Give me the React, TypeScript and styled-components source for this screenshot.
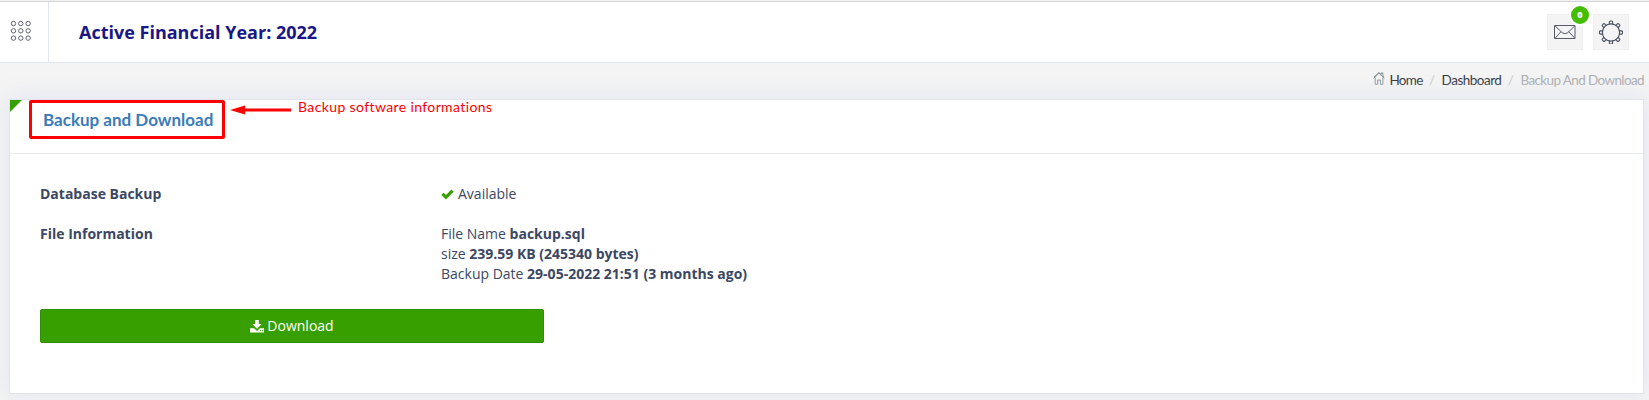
import React from 'react';
import styled, { createGlobalStyle } from 'styled-components';

const Global = createGlobalStyle`
  * { box-sizing: border-box; }
  body {
    margin: 0;
    background: #f4f4f4;
    font: 14px/20px "Open Sans", sans-serif;
    color: #3b4763;
  }
`;

const Page = styled.div`
  height: 400px;
  overflow: hidden;
  border-top: 1px solid #f0f0f0;
  background: #f4f4f4;
`;

const Header = styled.header`
  display: flex;
  height: 62px;
  background: #fff;
  border-top: 1px solid #d3d6d8;
  border-bottom: 1px solid #e1e6ef;
`;

const MenuCell = styled.div`
  width: 49px;
  padding: 18px 0 0 10px;
  border-right: 1px solid #e1e6ef;
`;

const YearTitle = styled.h1`
  flex: 1;
  margin: 0;
  padding: 18px 0 0 30px;
  font-size: 18px;
  line-height: 25px;
  font-weight: 700;
  color: #191785;
`;

const Actions = styled.div`
  display: flex;
  gap: 10px;
  padding: 12px 20px 0 0;
`;

const ActionButton = styled.div`
  position: relative;
  display: flex;
  align-items: center;
  justify-content: center;
  width: 36px;
  height: 36px;
  background: #f4f4f4;
  border: 1px solid #efefef;
`;

const Badge = styled.span`
  position: absolute;
  top: -11px;
  right: -9px;
  width: 22px;
  height: 22px;
  border: 2px solid #fff;
  border-radius: 50%;
  background: #46be00;
  color: #fff;
  font: 800 9px/18px "Open Sans", sans-serif;
  text-align: center;
`;

const Breadcrumb = styled.nav`
  display: flex;
  justify-content: flex-end;
  align-items: center;
  height: 35px;
  padding: 0 5px 2px 0;
  font: 13.5px/20px Lato, sans-serif;
`;

const Crumb = styled.span<{ $muted?: boolean; $spacing: number }>`
  color: ${p => (p.$muted ? '#a9abad' : '#2c2f36')};
  letter-spacing: ${p => p.$spacing}px;
  white-space: nowrap;
`;

const Slash = styled.span`
  width: 19px;
  text-align: center;
  color: #c4c6c8;
`;

const HomeIcon = styled.svg`
  margin: -3px 4px 0 0;
`;

const Card = styled.section`
  position: relative;
  width: 1635px;
  height: 295px;
  margin: 1px 0 0 9px;
  background: #fff;
  border: 1px solid #e1e4ef;
  box-shadow: 0 0 24px 2px #e4e6f1;
`;

const CardHeader = styled.div`
  height: 54px;
  padding: 8px 0 0 33px;
  border-bottom: 1px solid #e9ebed;
`;

const CardTitle = styled.h2`
  margin: 0;
  font: 700 17px/24px Lato, sans-serif;
  color: #3b7bb8;
`;

const Corner = styled.span`
  position: absolute;
  top: 0;
  left: 0;
  border-top: 12px solid #339f00;
  border-right: 12px solid transparent;
`;

const Highlight = styled.div`
  position: absolute;
  top: 0;
  left: 19px;
  width: 196px;
  height: 39px;
  border: 3px solid #f00;
  border-radius: 2px;
`;

const Note = styled.div`
  position: absolute;
  top: -1px;
  left: 220px;
  display: flex;
  gap: 7px;
  font: 14px/15px Lato, sans-serif;
  letter-spacing: 0.38px;
  color: #f00;
`;

const Arrow = styled.svg`
  margin-top: 6px;
`;

const CardBody = styled.div`
  display: flex;
  flex-direction: column;
  gap: 20px;
  padding: 30px;
`;

const Row = styled.div`
  display: grid;
  grid-template-columns: 401px 1fr;
`;

const Label = styled.div`
  font-weight: 700;
`;

const Value = styled.div`
  b { font-weight: 700; }
`;

const CheckIcon = styled.svg`
  margin-right: 4px;
  vertical-align: -1px;
`;

const DownloadButton = styled.button`
  display: flex;
  align-items: center;
  justify-content: center;
  gap: 3px;
  width: 504px;
  height: 34px;
  margin: 5px 0 0;
  padding: 0;
  border: 1px solid #318d04;
  border-radius: 2px;
  background: #37a000;
  color: #fff;
  font: 14px/20px "Open Sans", sans-serif;
`;

const dots = [3, 10.3, 17.6];

export default function App() {
  return (
    <Page>
      <Global />
      <Header>
        <MenuCell>
          <svg width="22" height="22" fill="none" stroke="#62636f" strokeWidth="1">
            {dots.map(y => dots.map(x => <circle key={`${x}-${y}`} cx={x + 0.5} cy={y + 0.5} r="2.2" />))}
          </svg>
        </MenuCell>
        <YearTitle>Active Financial Year: 2022</YearTitle>
        <Actions>
          <ActionButton>
            <svg width="22" height="16" fill="none" stroke="#555b6d" strokeWidth="1">
              <path d="M.5 1.5h20.5v13H.5zM1 1.8l7.2 6.9q2.8 2.2 5.5 0l7.2-6.9M1 14.2l6-6.5M20.8 14.2l-6-6.5" />
            </svg>
            <Badge>0</Badge>
          </ActionButton>
          <ActionButton>
            <svg width="24" height="24" viewBox="-12 -12.5 24 24" fill="none" stroke="#484f62" strokeWidth="1.1">
              <circle r="8.6" />
              {[0, 45, 90, 135, 180, 225, 270, 315].map(a => (
                <path key={a} transform={`rotate(${a})`} d="M-1.6-8.3v-2.2q0-1 1-1h1.2q1 0 1 1v2.2" />
              ))}
            </svg>
          </ActionButton>
        </Actions>
      </Header>
      <Breadcrumb>
        <HomeIcon width="12" height="13" fill="none" stroke="#7c8990" strokeWidth="0.9">
          <path d="M.6 6.4 6 1.2l5.4 5.2M1 4.9 6 .5l2.3 2V.9h1.6v3l1.3 1.2M2.2 5.5v6.8h2.5V8h2.7v4.3h2.5V5.5" />
        </HomeIcon>
        <Crumb $spacing={-0.7}>Home</Crumb>
        <Slash>/</Slash>
        <Crumb $spacing={-0.5}>Dashboard</Crumb>
        <Slash>/</Slash>
        <Crumb $muted $spacing={-0.62}>Backup And Download</Crumb>
      </Breadcrumb>
      <Card>
        <CardHeader>
          <CardTitle>Backup and Download</CardTitle>
        </CardHeader>
        <CardBody>
          <Row>
            <Label>Database Backup</Label>
            <Value>
              <CheckIcon width="13" height="11" viewBox="0 0 13 11">
                <path d="M.3 6 2.5 3.7 5 6.1 10.4.5l2.3 2.2L5 10.5z" fill="#37a000" />
              </CheckIcon>
              Available
            </Value>
          </Row>
          <Row>
            <Label>File Information</Label>
            <Value>
              File Name <b>backup.sql</b><br />
              size <b>239.59 KB (245340 bytes)</b><br />
              Backup Date <b>29-05-2022 21:51 (3 months ago)</b>
            </Value>
          </Row>
          <DownloadButton>
            <svg width="14" height="13" viewBox="0 0 14 13" fill="#fff">
              <path d="M5.2 0h3.6v4h2.8L7 8.7 2.4 4h2.8zM0 8.2h4.1L7 10.9l2.9-2.7H14v4.3H0zM10 10.3v.9h1v-.9zm2 0v.9h1v-.9z" fillRule="evenodd" />
            </svg>
            Download
          </DownloadButton>
        </CardBody>
        <Corner />
        <Highlight />
        <Note>
          <Arrow width="61" height="10">
            <path d="M0 5 15 .5V3.5H61v3H15v3z" fill="#f00" />
          </Arrow>
          Backup software informations
        </Note>
      </Card>
    </Page>
  );
}
